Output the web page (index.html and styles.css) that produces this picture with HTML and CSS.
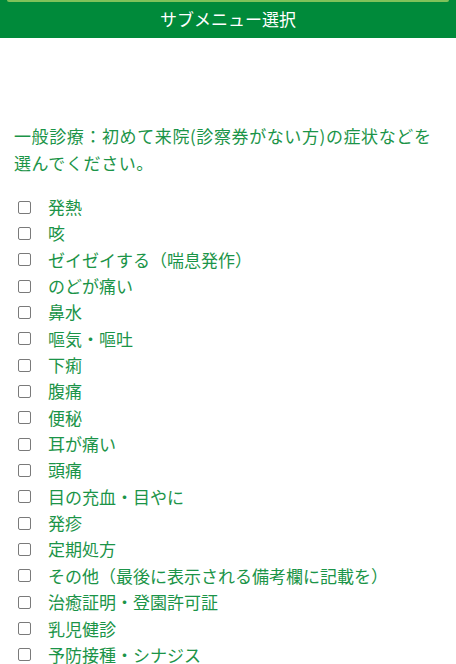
FILE: index.html
```html
<!DOCTYPE html>
<html lang="ja">
    <head>
        <meta charset="utf-8">
        <link rel="stylesheet" href="styles.css">
    </head>
    <body>
        <div class="header">
            <div class="prev-btn"></div>
            <h1>サブメニュー選択</h1>
        </div>
        <div class="content">
            <p class="lead">一般診療：初めて来院(診察券がない方)の症状などを選んでください。</p>
            <ul class="choices">
                <li><label><input type="checkbox"><span>発熱</span></label></li>
                <li><label><input type="checkbox"><span>咳</span></label></li>
                <li><label><input type="checkbox"><span>ゼイゼイする（喘息発作）</span></label></li>
                <li><label><input type="checkbox"><span>のどが痛い</span></label></li>
                <li><label><input type="checkbox"><span>鼻水</span></label></li>
                <li><label><input type="checkbox"><span>嘔気・嘔吐</span></label></li>
                <li><label><input type="checkbox"><span>下痢</span></label></li>
                <li><label><input type="checkbox"><span>腹痛</span></label></li>
                <li><label><input type="checkbox"><span>便秘</span></label></li>
                <li><label><input type="checkbox"><span>耳が痛い</span></label></li>
                <li><label><input type="checkbox"><span>頭痛</span></label></li>
                <li><label><input type="checkbox"><span>目の充血・目やに</span></label></li>
                <li><label><input type="checkbox"><span>発疹</span></label></li>
                <li><label><input type="checkbox"><span>定期処方</span></label></li>
                <li><label><input type="checkbox"><span>その他（最後に表示される備考欄に記載を）</span></label></li>
                <li><label><input type="checkbox"><span>治癒証明・登園許可証</span></label></li>
                <li><label><input type="checkbox"><span>乳児健診</span></label></li>
                <li><label><input type="checkbox"><span>予防接種・シナジス</span></label></li>
            </ul>
        </div>
    </body>
</html>
```

FILE: styles.css
```css
body{
    margin: 0;
    font-family: "Noto Sans CJK JP", "Noto Sans", sans-serif;
    background: #fff;
    color: #1b9448;
}
.header{
    background-color: #008a3a;
    height: 38px;
    display: flex;
    flex-direction: column;
    align-items: center;
}
.prev-btn{
    width: 442px;
    height: 2px;
    background-color: #7fc25a;
    border-radius: 0 0 3px 3px;
}
.header h1{
    margin: 0;
    margin-top: 5px;
    color: #fff;
    font-size: 17px;
    font-weight: normal;
    line-height: 24px;
}
.content{
    padding: 0 14px;
}
.lead{
    margin: 84px 0 0;
    font-size: 17px;
    line-height: 27px;
    letter-spacing: 0.6px;
}
.choices{
    list-style: none;
    margin: 18px 0 0;
    padding: 0;
}
.choices li{
    height: 26.35px;
}
.choices label{
    display: flex;
    align-items: center;
    height: 26px;
}
.choices input{
    appearance: none;
    -webkit-appearance: none;
    width: 13px;
    height: 13px;
    margin: 0 17px 0 4px;
    border: 1px solid #7a7a7a;
    border-radius: 2px;
    background: #fff;
}
.choices span{
    font-size: 17px;
    line-height: 26px;
}
```
